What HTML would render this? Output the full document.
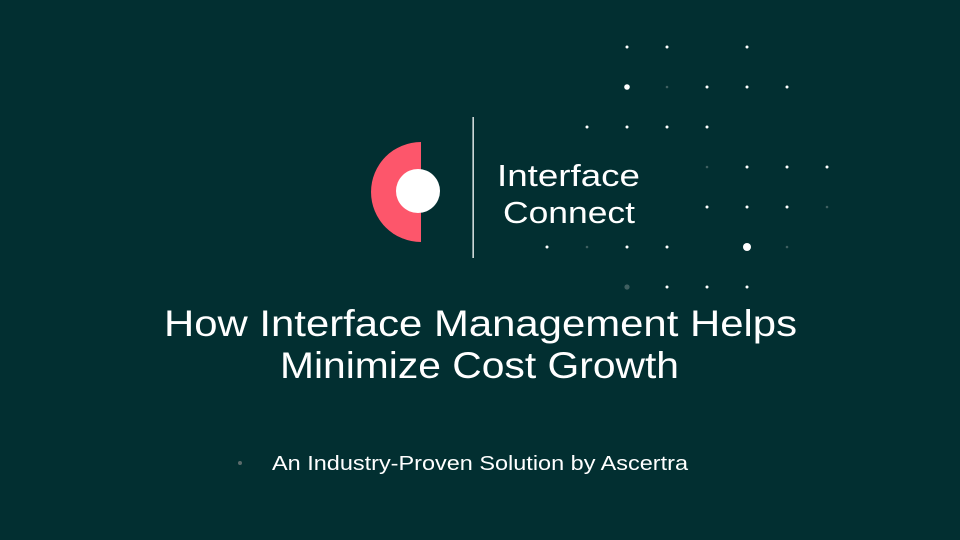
<!DOCTYPE html>
<html><head><meta charset="utf-8"><style>
html,body{margin:0;padding:0;background:#022f31;}
svg{display:block}
text{font-family:"Liberation Sans",sans-serif;fill:#fff;}
</style></head><body>
<svg width="960" height="540" viewBox="0 0 960 540" xmlns="http://www.w3.org/2000/svg">
<rect width="960" height="540" fill="#022f31"/>
<path d="M421 142 A50 50 0 0 0 421 242 Z" fill="#fd566b"/>
<circle cx="418" cy="191" r="22" fill="#fff"/>
<rect x="472.5" y="117" width="1.3" height="141" fill="#fff"/>
<text x="497" y="186" font-size="31" textLength="143" lengthAdjust="spacingAndGlyphs">Interface</text>
<text x="503" y="223" font-size="31" textLength="132" lengthAdjust="spacingAndGlyphs">Connect</text>
<g fill="#fff">
<circle cx="627" cy="47" r="1.5"/><circle cx="667" cy="47" r="1.5"/><circle cx="747" cy="47" r="1.5"/>
<circle cx="627" cy="87" r="2.8"/><circle cx="707" cy="87" r="1.5"/><circle cx="747" cy="87" r="1.5"/><circle cx="787" cy="87" r="1.5"/>
<circle cx="587" cy="127" r="1.5"/><circle cx="627" cy="127" r="1.5"/><circle cx="667" cy="127" r="1.5"/><circle cx="707" cy="127" r="1.5"/>
<circle cx="747" cy="167" r="1.5"/><circle cx="787" cy="167" r="1.5"/><circle cx="827" cy="167" r="1.5"/>
<circle cx="707" cy="207" r="1.5"/><circle cx="747" cy="207" r="1.5"/><circle cx="787" cy="207" r="1.5"/>
<circle cx="547" cy="247" r="1.5"/><circle cx="627" cy="247" r="1.5"/><circle cx="667" cy="247" r="1.5"/><circle cx="747" cy="247" r="4"/>
<circle cx="667" cy="287" r="1.5"/><circle cx="707" cy="287" r="1.5"/><circle cx="747" cy="287" r="1.5"/>
</g>
<g fill="#3f5f60">
<circle cx="667" cy="87" r="1.3"/><circle cx="707" cy="167" r="1.3"/><circle cx="827" cy="207" r="1.3"/>
<circle cx="587" cy="247" r="1.3"/><circle cx="787" cy="247" r="1.3"/><circle cx="627" cy="287" r="2.6"/>
</g>
<text x="164" y="336" font-size="37" textLength="633" lengthAdjust="spacingAndGlyphs">How Interface Management Helps</text>
<text x="280" y="378" font-size="37" textLength="399" lengthAdjust="spacingAndGlyphs">Minimize Cost Growth</text>
<circle cx="240" cy="463" r="2" fill="#5a6a6a"/>
<text x="272" y="470" font-size="20" textLength="416" lengthAdjust="spacingAndGlyphs">An Industry-Proven Solution by Ascertra</text>
</svg>
</body></html>
